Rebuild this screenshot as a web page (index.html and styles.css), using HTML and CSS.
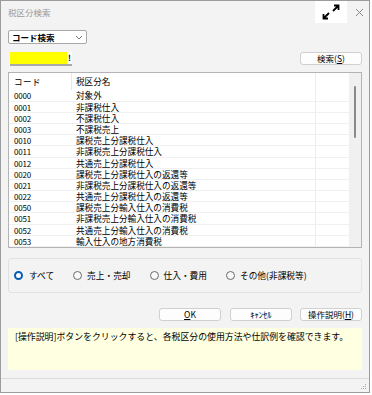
FILE: index.html
```html
<!DOCTYPE html>
<html lang="ja">
<head>
    <meta charset="UTF-8">
    <title>税区分検索</title>
    <link rel="stylesheet" href="styles.css">
</head>
<body>
    <div class="window">
        <div class="titlebar">
            <span class="title">税区分検索</span>
            <span class="expand">
                <svg width="32" height="22" viewBox="0 0 32 22">
                    <path d="M18 10 L23.5 4.5 M19 4.5 H23.5 V9 M14 12 L8.5 17.5 M8.5 13 V17.5 H13" fill="none" stroke="#000" stroke-width="1.8"/>
                </svg>
            </span>
            <span class="close">
                <svg width="9" height="9" viewBox="0 0 9 9">
                    <path d="M1 1 L8 8 M8 1 L1 8" stroke="#8a8a8a" stroke-width="1"/>
                </svg>
            </span>
        </div>

        <div class="content">
            <div class="select">
                <span>コード検索</span>
                <svg width="8" height="5" viewBox="0 0 8 5"><path d="M1 1 L4 4 L7 1" fill="none" stroke="#666" stroke-width="0.9"/></svg>
            </div>

            <div class="search-row">
                <div class="code-input"><span class="yellow"></span><span class="bang">!</span></div>
                <button class="btn btn-search">検索(<u>S</u>)</button>
            </div>

            <div class="list">
                <div class="list-body">
                    <div class="row head"><span class="c-code">コード</span><span class="c-name">税区分名</span><span class="c-extra"></span></div>
                    <div class="row"><span class="c-code">0000</span><span class="c-name">対象外</span><span class="c-extra"></span></div>
                    <div class="row"><span class="c-code">0001</span><span class="c-name">非課税仕入</span><span class="c-extra"></span></div>
                    <div class="row"><span class="c-code">0002</span><span class="c-name">不課税仕入</span><span class="c-extra"></span></div>
                    <div class="row"><span class="c-code">0003</span><span class="c-name">不課税売上</span><span class="c-extra"></span></div>
                    <div class="row"><span class="c-code">0010</span><span class="c-name">課税売上分課税仕入</span><span class="c-extra"></span></div>
                    <div class="row"><span class="c-code">0011</span><span class="c-name">非課税売上分課税仕入</span><span class="c-extra"></span></div>
                    <div class="row"><span class="c-code">0012</span><span class="c-name">共通売上分課税仕入</span><span class="c-extra"></span></div>
                    <div class="row"><span class="c-code">0020</span><span class="c-name">課税売上分課税仕入の返還等</span><span class="c-extra"></span></div>
                    <div class="row"><span class="c-code">0021</span><span class="c-name">非課税売上分課税仕入の返還等</span><span class="c-extra"></span></div>
                    <div class="row"><span class="c-code">0022</span><span class="c-name">共通売上分課税仕入の返還等</span><span class="c-extra"></span></div>
                    <div class="row"><span class="c-code">0050</span><span class="c-name">課税売上分輸入仕入の消費税</span><span class="c-extra"></span></div>
                    <div class="row"><span class="c-code">0051</span><span class="c-name">非課税売上分輸入仕入の消費税</span><span class="c-extra"></span></div>
                    <div class="row"><span class="c-code">0052</span><span class="c-name">共通売上分輸入仕入の消費税</span><span class="c-extra"></span></div>
                    <div class="row"><span class="c-code">0053</span><span class="c-name">輸入仕入の地方消費税</span><span class="c-extra"></span></div>
                </div>
                <div class="scrollbar"><span class="thumb"></span></div>
            </div>

            <div class="groupbox">
                <label class="radio"><span class="dot checked"></span>すべて</label>
                <label class="radio"><span class="dot"></span>売上・売却</label>
                <label class="radio"><span class="dot"></span>仕入・費用</label>
                <label class="radio"><span class="dot"></span>その他(非課税等)</label>
            </div>

            <div class="buttons">
                <button class="btn"><u>O</u>K</button>
                <button class="btn">ｷｬﾝｾﾙ</button>
                <button class="btn">操作説明(<u>H</u>)</button>
            </div>

            <div class="info">[操作説明]ボタンをクリックすると、各税区分の使用方法や仕訳例を確認できます。</div>
        </div>

        <div class="statusbar">
            <svg class="grip" width="6" height="6" viewBox="0 0 6 6">
                <rect x="4" y="0" width="1" height="1" fill="#aaa"/>
                <rect x="2" y="2" width="1" height="1" fill="#aaa"/>
                <rect x="4" y="2" width="1" height="1" fill="#aaa"/>
                <rect x="0" y="4" width="1" height="1" fill="#aaa"/>
                <rect x="2" y="4" width="1" height="1" fill="#aaa"/>
                <rect x="4" y="4" width="1" height="1" fill="#aaa"/>
            </svg>
        </div>
    </div>
</body>
</html>
```

FILE: styles.css
```css
* {
    box-sizing: border-box;
}
body {
    margin: 0;
    background: #fff;
    font-family: "Noto Sans CJK JP", "Noto Sans", sans-serif;
    color: #000;
}
.window {
    width: 370px;
    height: 393px;
    border: 1px solid #9c9c9c;
    background: #f3f3f3;
    display: flex;
    flex-direction: column;
}
.titlebar {
    height: 22px;
    display: flex;
    align-items: center;
    flex-shrink: 0;
}
.title {
    font-size: 8.5px;
    color: #9a9a9a;
    padding-left: 7px;
    flex: 1;
}
.expand {
    width: 32px;
    height: 22px;
    background: #fff;
    display: flex;
}
.close {
    width: 22px;
    display: flex;
    justify-content: center;
    padding-left: 2px;
}
.content {
    padding: 7px 7px 0 7px;
    flex: 1;
}
.select {
    width: 79px;
    height: 14px;
    border: 1px solid #a8a8a8;
    border-radius: 2px;
    background: #fff;
    display: flex;
    align-items: center;
    justify-content: space-between;
    padding: 0 3px 0 3px;
    font-size: 8.5px;
    font-weight: bold;
}
.search-row {
    margin-top: 8px;
    display: flex;
    justify-content: space-between;
    align-items: flex-start;
}
.code-input {
    margin-left: 2px;
    display: flex;
    height: 14px;
    border-bottom: 2px solid #a9a9a9;
}
.yellow {
    width: 57px;
    height: 12px;
    background: #ffff00;
}
.bang {
    width: 5px;
    height: 12px;
    background: #fff;
    font-size: 8px;
    line-height: 12px;
    text-align: center;
    font-weight: bold;
}
.btn {
    height: 13px;
    width: 62px;
    padding: 0;
    border: 1px solid #d0d0d0;
    border-radius: 3px;
    background: #fdfdfd;
    font-family: "Noto Sans CJK JP", sans-serif;
    font-size: 8.5px;
    line-height: 11px;
    color: #000;
}
.list {
    margin-top: 6px;
    height: 176px;
    border: 1px solid #b4b4b4;
    background: #fff;
    display: flex;
    overflow: hidden;
}
.list-body {
    flex: 1;
    overflow: hidden;
}
.row {
    display: flex;
    height: 11.2px;
    line-height: 11.2px;
    font-size: 8.6px;
    border-bottom: 1px solid #f0f0f0;
}
.row.head {
    height: 17.4px;
    line-height: 17.4px;
    border-bottom: none;
}
.c-code {
    width: 63px;
    padding-left: 5px;
    font-size: 8px;
    letter-spacing: -0.2px;
}
.head .c-code {
    font-size: 8.5px;
    letter-spacing: 0.5px;
    border-right: 1px solid #e8e8e8;
}
.c-name {
    width: 244px;
    padding-left: 4px;
    border-right: 1px solid #ececec;
    white-space: nowrap;
}
.c-extra {
    flex: 1;
}
.scrollbar {
    width: 12px;
    background: #f0f0f0;
    display: flex;
    justify-content: center;
    padding-top: 13px;
}
.thumb {
    width: 2px;
    height: 52px;
    background: #8a8a8a;
    border-radius: 1px;
}
.groupbox {
    margin-top: 10px;
    height: 35px;
    border: 1px solid #e2e2e2;
    border-radius: 3px;
    display: flex;
    align-items: center;
    padding-left: 5px;
    font-size: 8.7px;
}
.radio {
    display: flex;
    align-items: center;
    margin-right: 19px;
}
.dot {
    width: 9px;
    height: 9px;
    border: 1px solid #6a6a6a;
    border-radius: 50%;
    background: #f8f8f8;
    margin-right: 5px;
}
.dot.checked {
    border: 2.5px solid #005fb8;
    background: #fff;
    margin-right: 6px;
}
.buttons {
    margin-top: 15px;
    display: flex;
    justify-content: flex-end;
    gap: 9px;
}
.buttons .btn:nth-child(2) {
    margin-right: -1px;
}
.info {
    margin-top: 7px;
    height: 42px;
    background: #ffffe1;
    font-size: 8.9px;
    padding: 3px 0 0 7px;
    line-height: 12px;
    white-space: nowrap;
}
.statusbar {
    height: 14px;
    border-top: 1px solid #dcdcdc;
    display: flex;
    justify-content: flex-end;
    align-items: flex-end;
    padding: 0 2px 2px 0;
    flex-shrink: 0;
}
```
